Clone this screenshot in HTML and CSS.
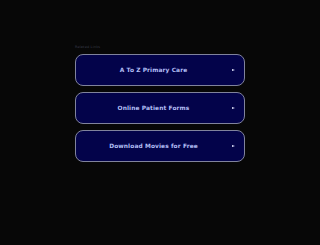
FILE: index.html
```html
<!DOCTYPE html>
<html>
<head>
<meta charset="utf-8">
<link rel="stylesheet" href="styles.css">
</head>
<body>
<div class="wrap">
  <div class="label">Related Links</div>
  <div class="links">
    <a class="link" href="#"><span class="text">A To Z Primary Care</span><span class="arrow"></span></a>
    <a class="link" href="#"><span class="text">Online Patient Forms</span><span class="arrow"></span></a>
    <a class="link" href="#"><span class="text">Download Movies for Free</span><span class="arrow"></span></a>
  </div>
</div>
</body>
</html>
```
FILE: styles.css
```css
html, body {
  margin: 0;
  padding: 0;
  background: #070707;
  height: 100%;
}
body {
  font-family: "DejaVu Sans", Verdana, sans-serif;
}
.wrap {
  width: 170px;
  margin-left: 75px;
  padding-top: 45px;
}
.label {
  font-size: 3.4px;
  line-height: 4px;
  height: 9px;
  color: #3a3d4c;
  letter-spacing: 0.2px;
}
.links {
  display: flex;
  flex-direction: column;
  gap: 6px;
}
.link {
  display: flex;
  align-items: center;
  height: 30px;
  border: 1px solid #80839c;
  border-radius: 8px;
  background: #03034a;
  padding: 0 9px 0 0;
  text-decoration: none;
  color: #b3bff5;
}
.text {
  flex: 1;
  text-align: center;
  padding-right: 1px;
  font-size: 5.9px;
  font-weight: bold;
  letter-spacing: 0.1px;
}
.arrow {
  width: 0;
  height: 0;
  border-top: 1.5px solid transparent;
  border-bottom: 1.5px solid transparent;
  border-left: 3px solid #e6e9ff;
}
```
